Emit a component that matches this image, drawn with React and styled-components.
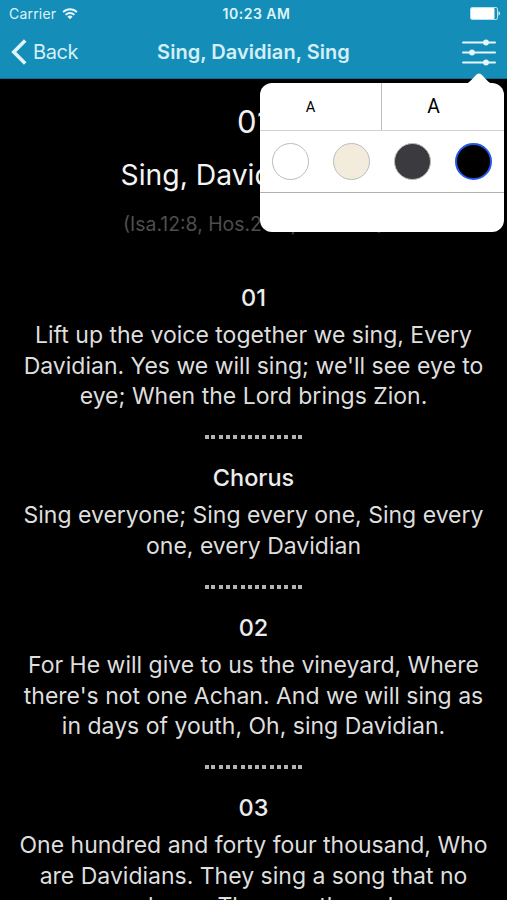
import styled, { createGlobalStyle } from 'styled-components';

const verses = [
  {
    label: '01',
    lines: [
      'Lift up the voice together we sing, Every',
      "Davidian. Yes we will sing; we'll see eye to",
      'eye; When the Lord brings Zion.',
    ],
  },
  {
    label: 'Chorus',
    lines: [
      'Sing everyone; Sing every one, Sing every',
      'one, every Davidian',
    ],
  },
  {
    label: '02',
    lines: [
      'For He will give to us the vineyard, Where',
      "there's not one Achan. And we will sing as",
      'in days of youth, Oh, sing Davidian.',
    ],
  },
  {
    label: '03',
    lines: [
      'One hundred and forty four thousand, Who',
      'are Davidians. They sing a song that no',
      'one knew. They are the only',
    ],
  },
];

const themes = [
  { name: 'White', color: '#ffffff' },
  { name: 'Sepia', color: '#f3ecdc' },
  { name: 'Gray', color: '#3b3b3f' },
  { name: 'Black', color: '#000000', selected: true },
];

const WifiIcon = () => (
  <svg width="16" height="12" viewBox="0 0 16 12" fill="none">
    <g stroke="#e4f7fb" strokeWidth="1.9">
      <path d="M1.1 4.1a9.8 9.8 0 0 1 13.8 0" />
      <path d="M3.6 6.8a6.2 6.2 0 0 1 8.8 0" />
    </g>
    <path d="M5.4 8.7a3.7 3.7 0 0 1 5.2 0L8 11.3z" fill="#e4f7fb" />
  </svg>
);

const BatteryIcon = () => (
  <svg width="30" height="13" viewBox="0 0 30 13">
    <rect x="0.5" y="0.5" width="27" height="12" rx="1.6" fill="none" stroke="#b9e2ef" />
    <rect x="1" y="1" width="23.5" height="11" rx="1" fill="#fff" />
    <path d="M28.5 4.3c1.8.6 1.8 3.8 0 4.4z" fill="#e4f7fb" />
  </svg>
);

const BackIcon = () => (
  <svg width="16" height="26" viewBox="0 0 16 26" fill="none">
    <path d="M14.2 1.6 2.8 13l11.4 11.4" stroke="#dff3f9" strokeWidth="3.6" />
  </svg>
);

const SettingsIcon = () => (
  <svg width="34" height="28" viewBox="0 0 34 28" fill="#e6f6fb">
    <rect x="0" y="3.4" width="34" height="2.2" rx="1" />
    <rect x="0" y="13.4" width="34" height="2.2" rx="1" />
    <rect x="0" y="23.4" width="34" height="2.2" rx="1" />
    <circle cx="24" cy="4.5" r="2.9" />
    <circle cx="10" cy="14.5" r="2.9" />
    <circle cx="24" cy="24.5" r="2.9" />
  </svg>
);

const Divider = () => (
  <Dots>
    {Array.from({ length: 14 }, (_, i) => (
      <Dot key={i} />
    ))}
  </Dots>
);

const Verse = ({ label, lines }) => (
  <section>
    <VerseLabel>{label}</VerseLabel>
    <VerseText>
      {lines.map((line) => (
        <Line key={line}>{line}</Line>
      ))}
    </VerseText>
    <Divider />
  </section>
);

const DisplayMenu = () => (
  <Menu>
    <Arrow viewBox="0 0 28 11">
      <path d="M0 11C4 10.5 6 7 10.5 2.5Q14 -1.5 17.5 2.5C22 7 24 10.5 28 11z" fill="#fff" />
    </Arrow>
    <FontSizes>
      <SizeButton $size={14.7} $shift={20}>A</SizeButton>
      <SizeButton $size={19.3} $shift={19}>A</SizeButton>
    </FontSizes>
    <Swatches>
      {themes.map(({ name, color, selected }) => (
        <Swatch key={name} aria-label={name} $color={color} $selected={selected} />
      ))}
    </Swatches>
  </Menu>
);

const App = () => (
  <Screen>
    <GlobalStyle />
    <Header>
      <StatusBar>
        <Carrier>
          Carrier <WifiIcon />
        </Carrier>
        <Time>10:23 AM</Time>
        <Battery>
          <BatteryIcon />
        </Battery>
      </StatusBar>
      <NavBar>
        <Back>
          <BackIcon />
          Back
        </Back>
        <NavTitle>Sing, Davidian, Sing</NavTitle>
        <Settings aria-label="Display settings">
          <SettingsIcon />
        </Settings>
      </NavBar>
    </Header>
    <Song>
      <Number>01</Number>
      <Title>Sing, Davidian, Sing</Title>
      <Reference>(Isa.12:8, Hos.2:23, Rev.14:3)</Reference>
      {verses.map((verse) => (
        <Verse key={verse.label} {...verse} />
      ))}
    </Song>
    <DisplayMenu />
  </Screen>
);

export default App;

const GlobalStyle = createGlobalStyle`
  * {
    box-sizing: border-box;
  }

  body {
    margin: 0;
    background: #000;
    overflow: hidden;
  }

  button {
    padding: 0;
    border: none;
    background: none;
    font: inherit;
    color: inherit;
  }

  svg {
    display: block;
  }
`;

const Screen = styled.div`
  position: relative;
  width: 507px;
  height: 900px;
  overflow: hidden;
  background: #000;
  color: #dedede;
  font-family: Inter, 'Liberation Sans', sans-serif;
`;

const Header = styled.header`
  height: 79px;
  background: #148eb8;
  border-bottom: 1px solid #0f6f91;
`;

const StatusBar = styled.div`
  display: grid;
  grid-template-columns: 1fr auto 1fr;
  align-items: center;
  height: 27px;
  padding: 0 7px 0 9px;
  color: #dff3f9;
`;

const Carrier = styled.div`
  display: flex;
  align-items: center;
  gap: 6px;
  font-size: 14px;
  letter-spacing: 0.2px;
`;

const Time = styled.div`
  padding-left: 4px;
  font-size: 14px;
  font-weight: 600;
  letter-spacing: 0.5px;
`;

const Battery = styled.div`
  justify-self: end;
`;

const NavBar = styled.nav`
  display: grid;
  grid-template-columns: 1fr auto 1fr;
  align-items: center;
  height: 50px;
  padding: 0 11px;
  color: #d5eff7;
`;

const Back = styled.button`
  display: flex;
  align-items: center;
  gap: 6px;
  font-size: 20px;
  letter-spacing: -0.4px;
`;

const NavTitle = styled.h1`
  margin: 0;
  font-size: 20px;
  font-weight: 600;
  line-height: 24px;
  letter-spacing: 0.04px;
  white-space: nowrap;
`;

const Settings = styled.button`
  justify-self: end;
`;

const Song = styled.main`
  padding-top: 23px;
  text-align: center;
`;

const Number = styled.div`
  font-size: 31px;
  line-height: 40px;
  letter-spacing: 0.4px;
  color: #f0f0f0;
`;

const Title = styled.h2`
  margin: 13px 0 0;
  font-size: 28.3px;
  font-weight: 400;
  line-height: 40px;
  color: #f4f4f4;
`;

const Reference = styled.div`
  margin: 14px 0 44px;
  font-size: 19.4px;
  line-height: 30px;
  color: #4e4e4e;
`;

const VerseLabel = styled.h3`
  margin: 0;
  font-size: 23.5px;
  font-weight: 500;
  line-height: 30px;
  color: #ececec;
`;

const VerseText = styled.p`
  margin: 7px 0 0;
`;

const Line = styled.span`
  display: block;
  font-size: 23px;
  line-height: 30.5px;
  white-space: nowrap;
`;

const Dots = styled.div`
  display: flex;
  justify-content: center;
  gap: 3.3px;
  margin: 23.5px 0 24.3px;
`;

const Dot = styled.span`
  width: 4px;
  height: 4px;
  background: #b4b4b4;

  &:first-child {
    margin-right: -1px;
  }

  &:last-child {
    margin-left: -1px;
  }
`;

const Menu = styled.div`
  position: absolute;
  top: 83px;
  left: 260px;
  width: 244px;
  height: 149px;
  border-radius: 12px;
  background: #fff;
`;

const Arrow = styled.svg`
  position: absolute;
  top: -10px;
  left: 205px;
  width: 28px;
  height: 11px;
`;

const FontSizes = styled.div`
  display: grid;
  grid-template-columns: 121px 1fr;
  height: 48px;
  border-bottom: 1px solid #d2d2d2;
`;

const SizeButton = styled.button`
  padding-right: ${(props) => props.$shift}px;
  font-family: Roboto, sans-serif;
  font-size: ${(props) => props.$size}px;
  color: #000;

  & + & {
    border-left: 1px solid #bdbdbd;
  }
`;

const Swatches = styled.div`
  display: flex;
  align-items: center;
  justify-content: space-between;
  height: 62px;
  padding: 0 12px;
  border-bottom: 1px solid #b0b0b0;
`;

const Swatch = styled.button`
  width: 37px;
  height: 37px;
  border: ${(props) => (props.$selected ? '2.5px solid #2458e6' : '1px solid #bcbcbc')};
  border-radius: 50%;
  background: ${(props) => props.$color};
`;
